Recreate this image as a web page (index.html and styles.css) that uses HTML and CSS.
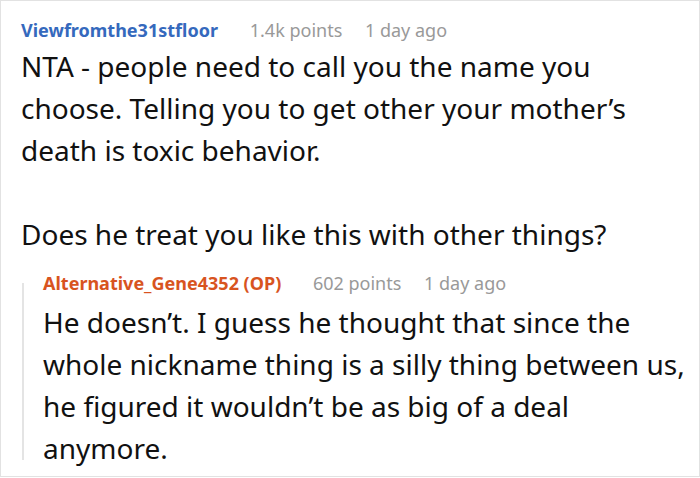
FILE: index.html
```html
<!DOCTYPE html>
<html lang="en">
<head>
<meta charset="utf-8">
<link rel="stylesheet" href="styles.css">
</head>
<body>
<div class="card">
  <div class="comment">
    <div class="meta">
      <span class="author">Viewfromthe31stfloor</span>
      <span class="points">1.4k points</span>
      <span class="time">1 day ago</span>
    </div>
    <div class="text">
      <p>NTA - people need to call you the name you choose. Telling you to get other your mother’s death is toxic behavior.</p>
      <p>Does he treat you like this with other things?</p>
    </div>
    <div class="reply">
      <div class="meta">
        <span class="author op">Alternative_Gene4352 (OP)</span>
        <span class="points">602 points</span>
        <span class="time">1 day ago</span>
      </div>
      <div class="text reply-text">
        <p>He doesn’t. I guess he thought that since the whole nickname thing is a silly thing between us, he figured it wouldn’t be as big of a deal anymore.</p>
      </div>
    </div>
  </div>
</div>
</body>
</html>
```

FILE: styles.css
```css
html, body {
  margin: 0;
  padding: 0;
  background: #fff;
}

.card {
  box-sizing: border-box;
  width: 700px;
  height: 477px;
  border: 1px solid #e2e2e2;
  font-family: "Noto Sans", "Open Sans", sans-serif;
  color: #111;
}

.comment {
  padding: 17px 13px 0 20px;
}

.meta {
  font-size: 18px;
  line-height: 24px;
  white-space: nowrap;
}

.author {
  font-weight: 700;
  color: #3569bd;
  margin-right: 27px;
}

.author.op {
  color: #d8541f;
  margin-right: 27px;
}

.points,
.time {
  color: #999;
}

.points {
  margin-right: 18px;
}

.text {
  margin-top: 3px;
  font-size: 28px;
  line-height: 42px;
}

.text p {
  margin: 0;
}

.text p + p {
  margin-top: 42px;
}

.reply {
  position: relative;
  margin-top: 16px;
  margin-left: 1px;
  padding-left: 21px;
}

.reply::before {
  content: "";
  position: absolute;
  left: 0;
  top: 12px;
  height: 177px;
  width: 2px;
  background: #e4e4e4;
}

.reply-text {
  margin-top: 6px;
}
```
